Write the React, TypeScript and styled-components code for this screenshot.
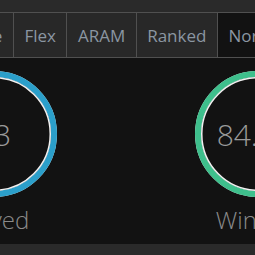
import React from 'react';
import styled, { createGlobalStyle } from 'styled-components';

const GlobalStyle = createGlobalStyle`
    html, body {
        margin: 0;
        padding: 0;
        background: #121212;
        font-family: 'Open Sans', 'Liberation Sans', sans-serif;
    }
`;

type StatType = {
    value: string;
    label: string;
    percent: number;
    color: string;
};

const tabs = ['Arcade', 'Flex', 'ARAM', 'Ranked', 'Normal'];
const activeTab = 'Normal';

const stats: StatType[] = [
    { value: '13', label: 'Played', percent: 100, color: '#2b9fca' },
    { value: '84.6%', label: 'Winrate', percent: 84.6, color: '#3ebf8c' },
];

const SIZE = 126;
const STROKE = 6;

const ProgressRing = ({ percent, color }: { percent: number; color: string }) => {
    const r = SIZE / 2 - STROKE / 2;
    const c = 2 * Math.PI * r;
    return (
        <svg width={SIZE} height={SIZE} viewBox={`0 0 ${SIZE} ${SIZE}`}>
            <circle cx={SIZE / 2} cy={SIZE / 2} r={r} fill="none" stroke="#e8e8e8" strokeWidth={STROKE} />
            <circle
                cx={SIZE / 2}
                cy={SIZE / 2}
                r={r}
                fill="none"
                stroke={color}
                strokeWidth={STROKE}
                strokeDasharray={`${(c * percent) / 100} ${c}`}
                transform={`rotate(-90 ${SIZE / 2} ${SIZE / 2}) scale(1 -1) translate(0 -${SIZE})`}
            />
            <circle cx={SIZE / 2} cy={SIZE / 2} r={SIZE / 2 - STROKE - 0.75} fill="none" stroke="#f2f2f2" strokeWidth={1.5} />
        </svg>
    );
};

export default function App() {
    return (
        <>
            <GlobalStyle />
            <StyledPage>
                <StyledTopBar />
                <StyledTabs>
                    {tabs.map((t) => (
                        <StyledTab key={t} active={t === activeTab}>
                            {t}
                        </StyledTab>
                    ))}
                </StyledTabs>
                <StyledStats>
                    {stats.map((s) => (
                        <StyledStat key={s.label}>
                            <StyledRing>
                                <ProgressRing percent={s.percent} color={s.color} />
                                <StyledValue>{s.value}</StyledValue>
                            </StyledRing>
                            <StyledLabel>{s.label}</StyledLabel>
                        </StyledStat>
                    ))}
                </StyledStats>
                <StyledFooter />
            </StyledPage>
        </>
    );
}

const StyledPage = styled.div`
    width: 255px;
    height: 255px;
    overflow: hidden;
    display: flex;
    flex-direction: column;
    background: #121212;
`;
const StyledTopBar = styled.div`
    height: 12px;
    flex-shrink: 0;
    background: #2a2a2a;
`;
const StyledTabs = styled.div`
    height: 44px;
    flex-shrink: 0;
    display: flex;
    justify-content: center;
    padding-right: 19px;
    border-top: 1px solid #505050;
    border-bottom: 1px solid #505050;
    background: #282828;
`;
const StyledTab = styled.div<{ active: boolean }>`
    flex-shrink: 0;
    display: flex;
    align-items: center;
    padding: 0 10.5px;
    border-right: 1px solid #505050;
    background: ${(props) => (props.active ? '#121212' : '#282828')};
    color: #8b96a2;
    font-size: 17px;
    white-space: nowrap;
`;
const StyledStats = styled.div`
    flex: 1;
    display: flex;
    justify-content: center;
    gap: 138px;
    padding-top: 13px;
    padding-right: 3px;
`;
const StyledStat = styled.div`
    width: ${SIZE}px;
    flex-shrink: 0;
    display: flex;
    flex-direction: column;
    align-items: center;
`;
const StyledRing = styled.div`
    display: grid;
    place-items: center;
    width: ${SIZE}px;
    height: ${SIZE}px;

    & > * {
        grid-area: 1 / 1;
    }
`;
const StyledValue = styled.div`
    font-size: 30px;
    font-weight: 300;
    color: #9a9a9a;
`;
const StyledLabel = styled.div`
    margin-top: 6px;
    font-size: 24px;
    font-weight: 300;
    color: #8a8a8a;
    white-space: nowrap;
`;
const StyledFooter = styled.div`
    height: 11px;
    flex-shrink: 0;
    background: #2a2a2a;
`;
